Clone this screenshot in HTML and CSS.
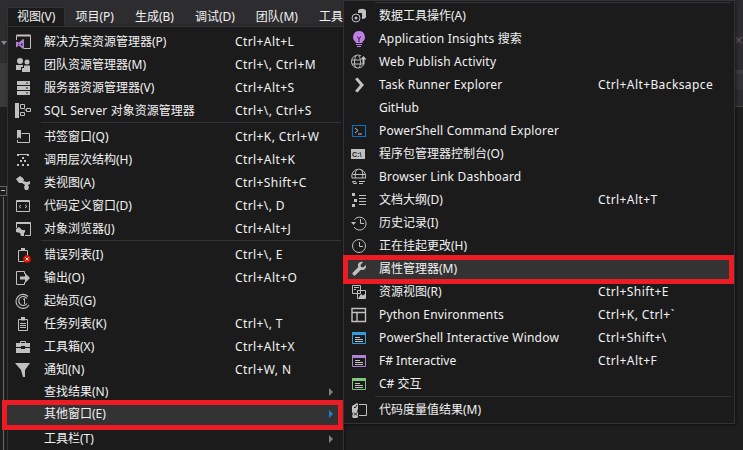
FILE: index.html
```html
<!DOCTYPE html>
<html lang="zh-CN">
<head>
<meta charset="utf-8">
<title>视图菜单</title>
<link rel="stylesheet" href="styles.css">
</head>
<body>
<header class="menubar">
  <span class="top active">视图(V)</span><span class="top">项目(P)</span><span class="top">生成(B)</span><span class="top">调试(D)</span><span class="top">团队(M)</span><span class="top">工具(T)</span>
</header>
<div class="toolbar">
  <div class="tool-left"><i class="caret"></i><div class="band"></div></div>
  <div class="tool-right"><span class="close">×</span><div class="band-r"></div></div>
</div>
<div class="editor"><span class="fold"></span></div>

<nav class="menu menu-main">
  <div class="row"><svg viewBox="0 0 16 16"><path class="s" d="M1.500 6V1.500h14v13H9"/><path class="s" d="M1.500 1.500h14" stroke-width="2"/><path class="v" d="M1 7.500v6l3-2 4 3.500 1-.5v-9l-1-.5-4 3.500zM3 9.500v2l1-1zM5.500 10.500l2 1.500V9z"/></svg><span class="label">解决方案资源管理器(P)</span><span class="key">Ctrl+Alt+L</span></div>
  <div class="row"><svg viewBox="0 0 16 16"><circle class="f" cx="5" cy="4" r="3"/><circle class="f" cx="12" cy="5" r="2.500"/><path class="f" d="M1 8h7v2H6v3H1zM7 11h2V8.500h6V15H7z"/></svg><span class="label">团队资源管理器(M)</span><span class="key">Ctrl+\, Ctrl+M</span></div>
  <div class="row"><svg viewBox="0 0 16 16"><path class="f" d="M2 1h13v4H2zM2 6h13v4H2zM2 11h13v4H2z"/><path class="d" d="M11 2.500h2v1h-2zM11 7.500h2v1h-2zM11 12.500h2v1h-2z"/></svg><span class="label">服务器资源管理器(V)</span><span class="key">Ctrl+Alt+S</span></div>
  <div class="row"><svg viewBox="0 0 16 16"><path class="f" d="M0 0h4v15H0z"/><path class="s" d="M5.500 1.500h4v4h-4zM11.500 5.500h4v3h-4zM5.500 9.500h4v3h-4zM9.500 7H11"/></svg><span class="label"><span class="lat">SQL Server</span> 对象资源管理器</span><span class="key">Ctrl+\, Ctrl+S</span></div>
  <div class="sep"></div>
  <div class="row"><svg viewBox="0 0 16 16"><path class="f" d="M2 1h4v9L4 8l-2 2z"/><path class="s" d="M6.500 4.500h8v9h-12V11"/></svg><span class="label">书签窗口(Q)</span><span class="key">Ctrl+K, Ctrl+W</span></div>
  <div class="row"><svg viewBox="0 0 16 16"><path class="f" d="M2 2h12v2h-2V3H4v1H2zM7 5h2v2H7zM5 8h2v2H5zM9 8h2v2H9zM2 12h2v2H2zM7 12h2v2H7zM12 12h2v2h-2z"/></svg><span class="label">调用层次结构(H)</span><span class="key">Ctrl+Alt+K</span></div>
  <div class="row"><svg viewBox="0 0 16 16"><path class="f" d="M1 4l4-3 3 2 1 2-2 3-3 0zM8 6l4 1 3-1v3l-2 1 1 2-1 3h-3l-1-3 1-2-3-2z"/></svg><span class="label">类视图(A)</span><span class="key">Ctrl+Shift+C</span></div>
  <div class="row"><svg viewBox="0 0 16 16"><path class="s" d="M1.500 2.500h13v11h-13z"/><path class="s" d="M1.500 3.500h13"/><path class="s" d="M6 7L4 8.500 6 10M10 7l2 1.500L10 10" stroke-width=".9"/></svg><span class="label">代码定义窗口(D)</span><span class="key">Ctrl+\, D</span></div>
  <div class="row"><svg viewBox="0 0 16 16"><path class="s" d="M1.500 7V1.500h14v13H10"/><path class="s" d="M1.500 2h14" stroke-width="2"/><path class="f" d="M1 8l3-2 2 2 1 1 3 0v2l-1 1v3H6l-1-3-4-1z"/></svg><span class="label">对象浏览器(J)</span><span class="key">Ctrl+Alt+J</span></div>
  <div class="sep"></div>
  <div class="row"><svg viewBox="0 0 16 16"><path class="s" d="M3.500 14.500v-11h9V9M3.500 14.500H9"/><path class="f" d="M6 1h4v3H6z"/><circle class="err" cx="12" cy="12" r="3.800"/><path class="ex" d="M10.500 10.500l3 3M13.500 10.500l-3 3"/></svg><span class="label">错误列表(I)</span><span class="key">Ctrl+\, E</span></div>
  <div class="row"><svg viewBox="0 0 16 16"><path class="s" d="M9.500 4V1.500h-8v13h8V12"/><path class="f" d="M5 6.500h5V3l5 5-5 5V9.500H5z"/></svg><span class="label">输出(O)</span><span class="key">Ctrl+Alt+O</span></div>
  <div class="row"><svg viewBox="0 0 16 16"><path class="s" d="M13 3.500A7 7 0 1 0 14 12" stroke-width="1.200"/><path class="s" d="M12 5.500A4.500 4.500 0 1 0 12 10.500" stroke-width="1.200"/><path class="s" d="M8 6.500l1.500-1V11" stroke-width="1"/></svg><span class="label">起始页(G)</span></div>
  <div class="row"><svg viewBox="0 0 16 16"><path class="s" d="M3.500 3.500h9v11h-9zM5 7.500h6M5 9.500h6M5 11.500h6"/><path class="f" d="M6 1h4v3.500H6z"/></svg><span class="label">任务列表(K)</span><span class="key">Ctrl+\, T</span></div>
  <div class="row"><svg viewBox="0 0 16 16"><path class="s" d="M5.500 4V2.500h5V4"/><path class="f" d="M1 4h14v4h-5V7H6v1H1zM1 9h5v1h4V9h5v5H1z"/></svg><span class="label">工具箱(X)</span><span class="key">Ctrl+Alt+X</span></div>
  <div class="row"><svg viewBox="0 0 16 16"><path class="f" d="M0 1h15L10 8l0 7h-2L6 8z"/></svg><span class="label">通知(N)</span><span class="key">Ctrl+W, N</span></div>
  <div class="row row-short"><span class="noicon"></span><span class="label">查找结果(N)</span><span class="key"></span><i class="arrow"></i></div>
  <div class="row row-hl"><span class="noicon"></span><span class="label">其他窗口(E)</span><span class="key"></span><i class="arrow arrow-on"></i></div>
  <div class="row"><span class="noicon"></span><span class="label">工具栏(T)</span><span class="key"></span><i class="arrow"></i></div>
</nav>

<nav class="menu menu-sub">
  <div class="sep"></div>
  <div class="row"><svg viewBox="0 0 16 16"><path class="f" d="M7 3c0-3 8-3 8 0v6c0 1-2 2-4 2V5H7z"/><circle class="s" cx="5" cy="10" r="4"/><circle class="f" cx="5" cy="10" r="1.500"/></svg><span class="label">数据工具操作(A)</span></div>
  <div class="row"><svg viewBox="0 0 16 16"><path class="p" d="M8 0a6 6 0 0 1 3.500 10.800V12h-7v-1.200A6 6 0 0 1 8 0z"/><path class="d" d="M6 5l2 2 2-2v1L8.500 7.500V11h-1V7.500L6 6z"/><path class="p" d="M5 13h6v1H5zM6 15h4v1H6z"/></svg><span class="label"><span class="lat">Application Insights</span> 搜索</span></div>
  <div class="row"><svg viewBox="0 0 16 16"><path class="s" d="M13 10A6.500 6.500 0 1 1 10 1.800M1 6h8M1 10h11M5 2c-2 3-2 9 0 12M8 2c2 3 2 9 0 12"/><path class="f" d="M12.500 2l3 3.500h-2V10h-2V5.500h-2z"/></svg><span class="label lat">Web Publish Activity</span></div>
  <div class="row"><svg viewBox="0 0 16 16"><path class="f" d="M4 2l2.500-1.500L13 8l-6.500 7.500L4 14l5-6z"/></svg><span class="label lat">Task Runner Explorer</span><span class="key">Ctrl+Alt+Backsapce</span></div>
  <div class="row"><span class="noicon"></span><span class="label">GitHub</span></div>
  <div class="row"><svg viewBox="0 0 16 16"><path class="b" d="M.5 2.500h13v11H.5z" transform="translate(1)"/><path class="s" d="M4 5l3 2.500L4 10M7 11h4"/></svg><span class="label lat">PowerShell Command Explorer</span></div>
  <div class="row"><svg viewBox="0 0 16 16"><path class="f" d="M0 3h14v10H0z"/><text class="cmd" x="1" y="11">C:\</text></svg><span class="label">程序包管理器控制台(O)</span></div>
  <div class="row"><svg viewBox="0 0 16 16"><path class="s" d="M1 9A7 7 0 1 1 14.500 9M1.500 5.500h13M1 9h14M5.500 1c-1.500 2-1.500 6-1 8M10.500 1c1.500 2 1.500 6 1 8M1.500 12.500h3l1 2h-3zM8 12.500h6M8 14.500h4"/></svg><span class="label lat">Browser Link Dashboard</span></div>
  <div class="row"><svg viewBox="0 0 16 16"><path class="f" d="M1 1h3v3H1zM3 7h3v3H3zM1 12h3v3H1z"/><path class="s" d="M8 3.500h7M8 6.500h7M8 9.500h7M8 12.500h7" /></svg><span class="label">文档大纲(D)</span><span class="key">Ctrl+Alt+T</span></div>
  <div class="row"><svg viewBox="0 0 16 16"><path class="s" d="M3.500 4.500A6.500 6.500 0 1 1 3 12M9.500 4v4.500H13"/><path class="f" d="M0 7h5L2.500 10z"/></svg><span class="label">历史记录(I)</span></div>
  <div class="row"><svg viewBox="0 0 16 16"><circle class="s" cx="8" cy="8" r="6.500"/><path class="s" d="M8.500 4v4.500H12"/></svg><span class="label">正在挂起更改(H)</span></div>
  <div class="row row-hl"><svg viewBox="0 0 16 16"><path class="f" d="M15 4l-3 2.500-2-.5-.5-2L12 1c-2-.8-4.500.3-5 2.500-.2 1 0 1.800.3 2.500L1 12.500 3.500 15l6.500-6.300c2.500.8 5-.7 5-3.200z"/></svg><span class="label">属性管理器(M)</span></div>
  <div class="row"><svg viewBox="0 0 16 16"><path class="s" d="M1.500 1.500h8v8h-8z"/><path class="s" d="M6.500 6.500h8v8h-8z"/><path class="f" d="M8 13l2-3 2 1.500 2-1.500v4H8zM3 3h5v1H3zM3 5h2v1H3z"/></svg><span class="label">资源视图(R)</span><span class="key">Ctrl+Shift+E</span></div>
  <div class="row"><svg viewBox="0 0 16 16"><path class="s" d="M1 1.500h13.500v13H1zM1 5.500h13.500M6 5.500v9" stroke-width="1.400"/></svg><span class="label lat">Python Environments</span><span class="key">Ctrl+K, Ctrl+`</span></div>
  <div class="row"><svg viewBox="0 0 16 16"><path class="w1" d="M1 2h14v3H1z"/><path class="s1" d="M1.500 2.500h13v11h-13z"/><path class="s" d="M4 7.500h5M4 9.500h8M4 11.500h8"/></svg><span class="label lat">PowerShell Interactive Window</span><span class="key">Ctrl+Shift+\</span></div>
  <div class="row"><svg viewBox="0 0 16 16"><path class="w2" d="M1 2h14v3H1z"/><path class="s2" d="M1.500 2.500h13v11h-13z"/><path class="s" d="M4 7.500h5M4 9.500h8M4 11.500h8"/></svg><span class="label">F# Interactive</span><span class="key">Ctrl+Alt+F</span></div>
  <div class="row"><svg viewBox="0 0 16 16"><path class="w3" d="M1 2h14v3H1z"/><path class="s3" d="M1.500 2.500h13v11h-13z"/><path class="s" d="M4 7.500h5M4 9.500h8M4 11.500h8"/></svg><span class="label">C# 交互</span></div>
  <div class="sep"></div>
  <div class="row"><svg viewBox="0 0 16 16"><path class="s" d="M8 2.500h7.500v11H8"/><path class="f" d="M1 4l5-3 1 1v5l-1 2 1 2v4l-1 1H2l-1-2 1-2-1-2z"/><path class="ex2" d="M3 5l1 1 2-3M3 10.500l3 3M6 10.500l-3 3"/></svg><span class="label">代码度量值结果(M)</span></div>
</nav>
</body>
</html>
```

FILE: styles.css
```css
* { box-sizing: border-box; }
html, body { margin: 0; height: 100%; overflow: hidden; }
body {
  position: relative;
  background: #1e1e1e;
  color: #f1f1f1;
  font: 12px/16px "Noto Sans", "Noto Sans CJK SC", sans-serif;
}

.menubar { display: flex; height: 26px; padding: 8px 0 0 8px; background: #2d2d30; }
.top { padding: 0 9px; margin-right: 3px; height: 18px; line-height: 17px; white-space: nowrap; }
.active { margin-right: 2px; background: #1b1b1c; box-shadow: 0 0 0 1px #333337; }

.toolbar { display: flex; justify-content: space-between; height: 81px; background: #2d2d30; border-bottom: 1px solid #454547; }
.tool-left { width: 8px; position: relative; }
.caret { display: block; width: 0; margin: 15px 0 0 1px; border: 3.5px solid transparent; border-top: 4px solid #8a8a8a; border-bottom: 0; }
.band { height: 44px; margin-top: 18px; background: #3a3a3c; }
.tool-right { width: 9px; color: #555; }
.close { display: block; margin-top: 6px; font-size: 16px; line-height: 16px; }
.band-r { height: 20px; margin-top: 22px; background: #343436; border-top: 4px solid #3c3c3e; }

.editor { height: 343px; padding-top: 79px; }
.fold { display: block; width: 7px; height: 10px; border: 1px solid #666; border-left: 0; position: relative; }
.fold::before { content: ""; position: absolute; left: 1px; top: 3px; width: 4px; height: 1px; background: #bbb; }
.fold::after { content: ""; position: absolute; left: 3px; top: 10px; width: 1px; height: 260px; background: #666; }

.menu { position: absolute; background: #1b1b1c; border: 1px solid #333337; box-shadow: 1px 1px 3px rgba(0,0,0,.5); }
.menu-main { left: 7px; top: 26px; width: 337px; height: 430px; padding-top: 3px; }
.menu-sub { left: 343px; top: 0; width: 392px; height: 424px; padding-top: 0; }

.row { position: relative; display: grid; height: 23px; align-items: center; white-space: nowrap; }
.menu-main .row { grid-template-columns: 36px 191px 1fr 14px; }
.menu-sub .row { grid-template-columns: 35px 219px 1fr; }
.row svg { width: 16px; height: 16px; margin-left: 7px; overflow: visible; }
.menu-main .row-short { height: 21px; }

.lat { letter-spacing: .2px; }
.key { letter-spacing: .4px; }

.row-hl { background: #333334; }
.row-hl::after { content: ""; position: absolute; border: 5px solid #ed1c24; }
.menu-main .row-hl { margin-bottom: 2px; }
.menu-main .row-hl::after { left: -6px; right: 0; top: -2px; bottom: -5px; }
.menu-sub .row-hl::after { left: -1px; right: 0; top: -2px; bottom: -4px; }

.sep { height: 3px; padding-top: 1px; }
.sep::before { content: ""; display: block; height: 1px; background: #333337; }
.menu-main .sep { padding-top: 0; margin-left: 33px; margin-right: 2px; }
.menu-sub .sep { margin-left: 31px; margin-right: 3px; }

.arrow { width: 0; border: 4px solid transparent; border-left: 4px solid #808080; border-right: 0; }
.arrow-on { border-left-color: #1c7cd6; }

.s { fill: none; stroke: #c0c0c0; }
.f { fill: #c0c0c0; }
.d { fill: #1b1b1c; }
.v { fill: #b180d7; fill-rule: evenodd; }
.p { fill: #c27fe8; }
.b { fill: none; stroke: #0e70c0; stroke-width: 1.200; }
.err { fill: #e41400; }
.ex { fill: none; stroke: #fff; stroke-width: 1; }
.ex2 { fill: none; stroke: #1b1b1c; stroke-width: 1; }
.cmd { font: 700 7px "Liberation Sans", sans-serif; fill: #1b1b1c; }
.w1 { fill: #2d9ee0; } .s1 { fill: none; stroke: #2d9ee0; }
.w2 { fill: #b180d7; } .s2 { fill: none; stroke: #b180d7; }
.w3 { fill: #7fc77f; } .s3 { fill: none; stroke: #7fc77f; }
```
